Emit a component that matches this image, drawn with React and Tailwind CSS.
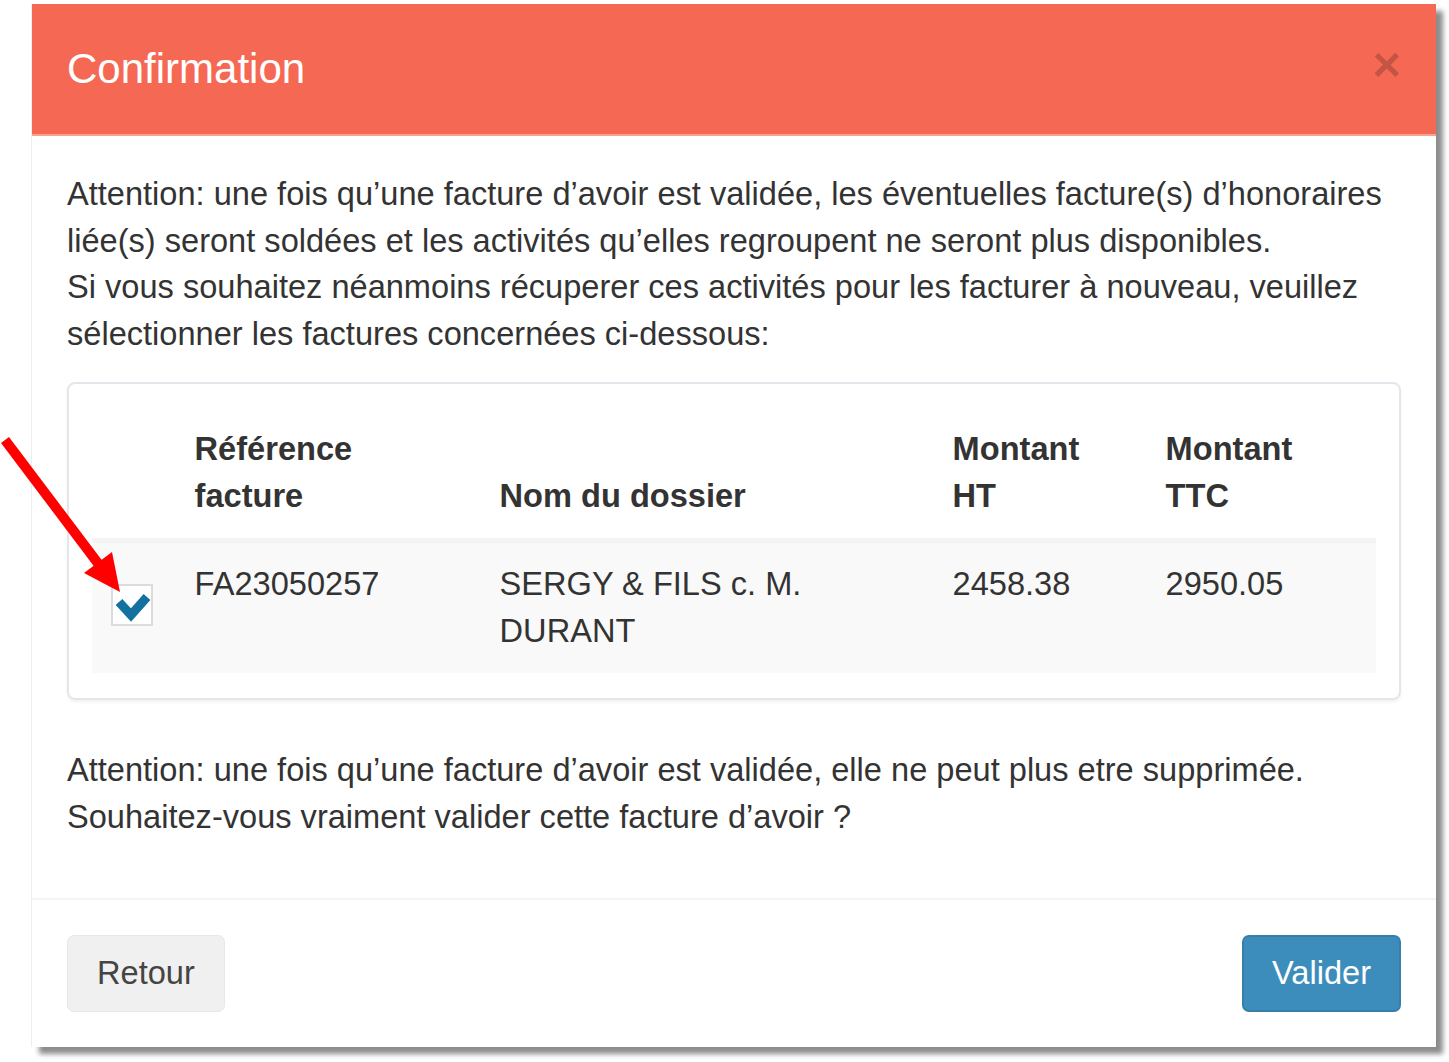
import React, { useState } from "react";

const rows = [
  { ref: "FA23050257", nom: ["SERGY & FILS c. M.", "DURANT"], ht: "2458.38", ttc: "2950.05" },
];

const Arrow = () => (
  <svg className="absolute left-0 top-[430px] pointer-events-none" width="140" height="180" viewBox="0 0 140 180">
    <line x1="5" y1="10" x2="100" y2="136" stroke="#ff0000" strokeWidth="10" />
    <polygon points="84,143 112,122 120,162" fill="#ff0000" />
  </svg>
);

const Check = ({ checked, onClick }) => (
  <button
    onClick={onClick}
    className="mt-[41px] w-[42px] h-[42px] bg-white border-2 border-[#dcdcdc] flex items-center justify-center"
  >
    {checked && (
      <svg width="38" height="38" viewBox="0 0 38 38">
        <path d="M6 16 L18 29 L34 11" fill="none" stroke="#13709f" strokeWidth="9" strokeLinejoin="miter" />
      </svg>
    )}
  </button>
);

export default function App() {
  const [checked, setChecked] = useState(true);

  return (
    <div className="relative min-h-[1062px] bg-white pt-[4px] pl-[32px]" style={{ fontFamily: '"Liberation Sans", Arial, sans-serif' }}>
      <div className="w-[1404px] bg-white shadow-[7px_7px_5px_rgba(0,0,0,0.45),-1px_0_0_#eeeeee]">
        {/* header */}
        <div className="bg-[#f56954] border-b-2 border-[#f8a293] px-[35px] flex items-start justify-between">
          <h4 className="text-[42px] leading-[60px] py-[35px] text-white">Confirmation</h4>
          <button className="mt-[36px] text-[49px] leading-[49px] font-bold text-black/20">×</button>
        </div>

        {/* body */}
        <div className="p-[35px] text-[32.6px] leading-[46.6px] text-[#333333]">
          <p className="mb-[25px] whitespace-nowrap">
            Attention: une fois qu’une facture d’avoir est validée, les éventuelles facture(s) d’honoraires
            <br />
            liée(s) seront soldées et les activités qu’elles regroupent ne seront plus disponibles.
            <br />
            Si vous souhaitez néanmoins récuperer ces activités pour les facturer à nouveau, veuillez
            <br />
            sélectionner les factures concernées ci-dessous:
          </p>

          <div className="border-2 border-[#e3e6ea] rounded-[8px] px-[23px] pt-[23px] pb-[25px] mb-[47px] shadow-[0_2px_3px_rgba(0,0,0,0.06)]">
            <table className="w-full border-collapse">
              <thead>
                <tr className="border-b-[5px] border-[#f4f4f4] text-left align-bottom">
                  <th className="w-[84px] p-[18.6px]"></th>
                  <th className="w-[305px] p-[18.6px] font-bold">Référence<br />facture</th>
                  <th className="w-[453px] p-[18.6px] font-bold">Nom du dossier</th>
                  <th className="w-[213px] p-[18.6px] font-bold">Montant<br />HT</th>
                  <th className="p-[18.6px] font-bold">Montant<br />TTC</th>
                </tr>
              </thead>
              <tbody>
                {rows.map((r) => (
                  <tr key={r.ref} className="bg-[#f9f9f9] align-top">
                    <td className="px-[18.6px]">
                      <Check checked={checked} onClick={() => setChecked(!checked)} />
                    </td>
                    <td className="p-[18.6px]">{r.ref}</td>
                    <td className="p-[18.6px]">
                      {r.nom[0]}
                      <br />
                      {r.nom[1]}
                    </td>
                    <td className="p-[18.6px]">{r.ht}</td>
                    <td className="p-[18.6px]">{r.ttc}</td>
                  </tr>
                ))}
              </tbody>
            </table>
          </div>

          <p className="mb-[23px] whitespace-nowrap">
            Attention: une fois qu’une facture d’avoir est validée, elle ne peut plus etre supprimée.
            <br />
            Souhaitez-vous vraiment valider cette facture d’avoir ?
          </p>
        </div>

        {/* footer */}
        <div className="border-t-2 border-[#f4f4f4] p-[35px] flex items-center justify-between">
          <button className="h-[77px] px-[29px] rounded-[7px] bg-[#f0f0f0] border border-[#e8e8e8] text-[32.6px] text-[#444444]">
            Retour
          </button>
          <button className="h-[77px] px-[28px] rounded-[7px] bg-[#3c8dbc] border-2 border-[#367fa9] text-[32.6px] text-white">
            Valider
          </button>
        </div>
      </div>
      <Arrow />
    </div>
  );
}
